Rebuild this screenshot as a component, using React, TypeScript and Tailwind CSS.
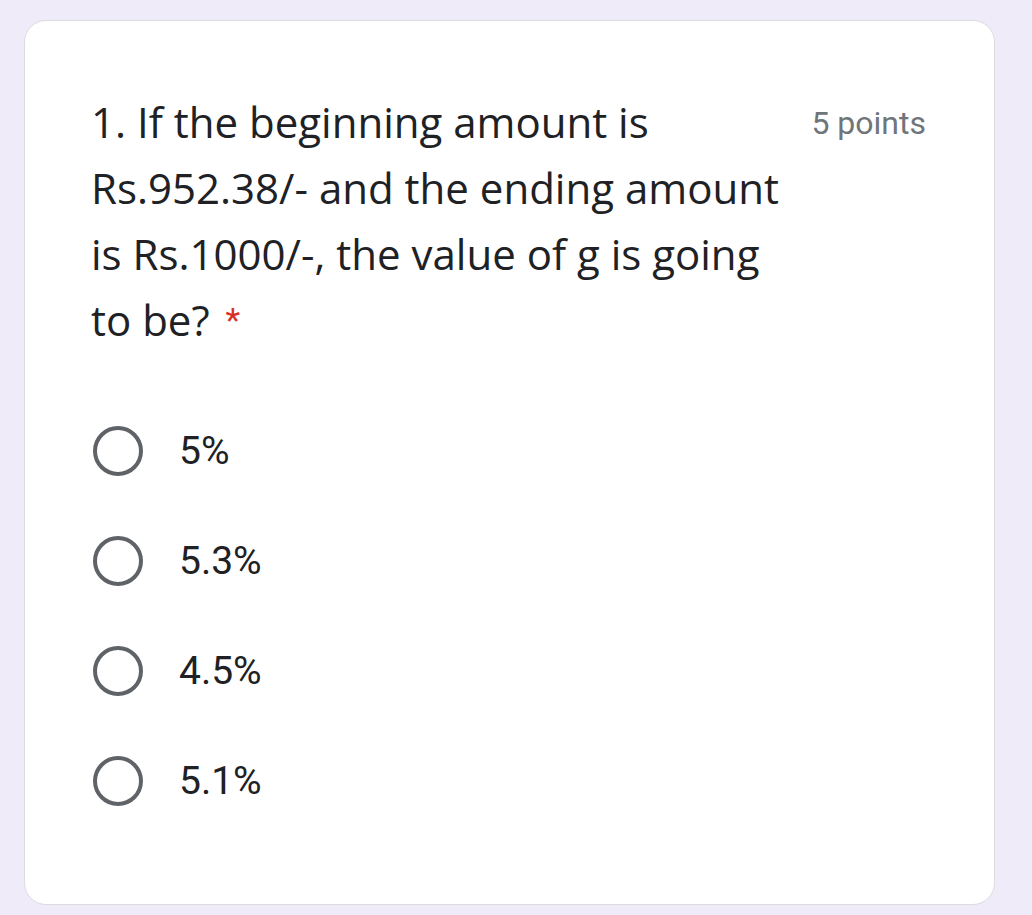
import React from 'react'

const options = ['5%', '5.3%', '4.5%', '5.1%']

export default function App() {
  return (
    <div className="min-h-[915px] w-full bg-[#efebf8] pl-6 pr-[37px] pt-5 pb-[10px]">
      <div className="flex h-[885px] flex-col rounded-[22px] border-[1.5px] border-[#dadce0] bg-white pl-[66px] pr-[68px] pt-[68px]">
        <div className="flex items-start justify-between">
          <div
            className="w-[720px] text-[42px] leading-[66px] text-[#202124]"
            style={{ fontFamily: '"Open Sans", sans-serif' }}
          >
            1. If the beginning amount is
            <br />
            Rs.952.38/- and the ending amount
            <br />
            is Rs.1000/-, the value of g is going
            <br />
            to be?
            <span className="ml-4 align-[4px] text-[34px] text-[#d93025]" style={{ fontFamily: 'Roboto, sans-serif' }}>
              *
            </span>
          </div>
          <div className="pt-[14px] text-[32px] leading-[40px] text-[#70757a]" style={{ fontFamily: 'Roboto, sans-serif' }}>
            5 points
          </div>
        </div>

        <div className="mt-[43px] flex flex-col">
          {options.map(opt => (
            <div key={opt} className="flex h-[110px] items-center gap-[36px] pl-[2px]">
              <span className="box-border h-[50px] w-[50px] rounded-full border-[4.5px] border-[#5f6368]" />
              <span className="text-[39px] text-[#202124]" style={{ fontFamily: 'Roboto, sans-serif' }}>
                {opt}
              </span>
            </div>
          ))}
        </div>
      </div>
    </div>
  )
}
